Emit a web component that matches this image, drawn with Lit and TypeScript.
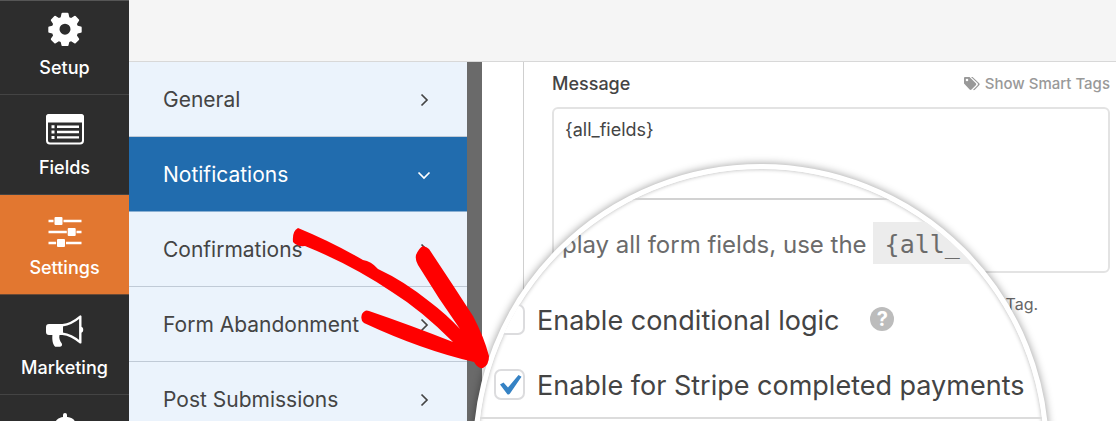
import { LitElement, html, svg, css } from "lit";
import { customElement, property } from "lit/decorators.js";
import { classMap } from "lit/directives/class-map.js";

const icons = {
  setup: svg`<svg viewBox="0 0 34 34" width="34" height="34" fill="currentColor" aria-hidden="true">
    <path fill-rule="evenodd" d="M14.500.800h5q.8 0 1 .8l.8 3.700 1.800.8 3.200-2.100q.7-.4 1.300.1l3.300 3.300q.5.600.1 1.300l-2.100 3.200.8 1.800 3.200.7q.8.200.8 1v4.400q0 .8-.8 1l-3.200.7-.8 1.900 2.100 3.200q.4.700-.1 1.300l-3.300 3.300q-.6.500-1.300.1l-3.200-2.100-1.800.8-.8 3.300q-.2.800-1 .8h-5q-.8 0-1-.8l-.8-3.300-1.800-.8-3.200 2.100q-.7.400-1.300-.1l-3.300-3.300q-.5-.6-.1-1.300l2.100-3.200-.8-1.900-3.200-.7q-.8-.2-.8-1v-4.400q0-.8.8-1l3.200-.7.8-1.800-2.100-3.200q-.4-.7.1-1.300l3.300-3.300q.6-.5 1.300-.1l3.200 2.100 1.800-.8.8-3.700q.2-.8 1-.8zM17 11.700a5.500 5.500 0 1 0 0 11 5.500 5.500 0 0 0 0-11z"/></svg>`,
  fields: svg`<svg viewBox="0 0 40 32" width="40" height="32" aria-hidden="true">
    <rect x="2" y="2" width="36" height="28.500" rx="3" fill="none" stroke="currentColor" stroke-width="2"/>
    <path fill="currentColor" d="M4 1h32a3 3 0 0 1 3 3v5.500H1V4a3 3 0 0 1 3-3zM6.500 12.300h3v3h-3zM6.500 17.600h3v3h-3zM6.500 23h3v3h-3zM12 12.500h22v2.400H12zM12 17.800h22v2.400H12zM12 23.200h22v2.400H12z"/></svg>`,
  settings: svg`<svg viewBox="0 -6 34 38" width="34" height="38" fill="currentColor" aria-hidden="true">
    <path d="M.5 3.700h5v2.600h-5zM15.500 3.700h18v2.600h-18zM.5 14.700h18.300v2.600H.5zM28.500 14.700h5v2.600h-5zM.5 25.700h7.600v2.600H.5zM18 25.700h15.500v2.600H18z"/>
    <rect x="6.500" y="1" width="8" height="8" rx="1"/><rect x="19.700" y="12" width="8" height="8" rx="1"/><rect x="9" y="23" width="8" height="8" rx="1"/></svg>`,
  marketing: svg`<svg viewBox="0 -4 40 38" width="40" height="38" aria-hidden="true">
    <path fill="currentColor" d="M4 10h14v11h-3.500c-.8 3 .3 5.800 2.300 8.500.8 1.600-.2 3.200-2 3.200h-4.600C7.600 30.500 7 25.500 7.400 21H4a3 3 0 0 1-3-3v-5a3 3 0 0 1 3-3z"/>
    <path fill="none" stroke="currentColor" stroke-width="2.400" stroke-linejoin="round" d="M17.500 11.200C24 10.500 29.500 7.500 35.300 2.600v25.800C29.500 23.500 24 20.500 17.500 19.800"/>
    <path fill="currentColor" d="M35.500 12.500a3.300 3.300 0 0 1 0 6.500z"/></svg>`,
  payments: svg`<svg viewBox="0 0 22 34" width="22" height="34" fill="none" stroke="currentColor" stroke-linecap="round" aria-hidden="true">
    <path stroke-width="4" d="M11 3v28"/>
    <path stroke-width="5" d="M18 9.500c-2-1.700-4.500-2.200-7-2.200-4 0-7.500 1.700-7.500 5 0 6.500 15 3 15 9.500 0 3.200-3.500 5-7.500 5-3.500 0-6-1-7.500-3"/></svg>`,
};

@customElement("side-nav")
class SideNav extends LitElement {
  static styles = css`
    :host { display: block; background: #2d2d2d; box-shadow: inset 0 1px #565656; }
    .item {
      box-sizing: border-box; height: 100px; padding-bottom: 14px;
      display: flex; flex-direction: column; align-items: center; justify-content: flex-end; gap: 10px;
      border-bottom: 1px solid #444; color: #fff; text-decoration: none;
      font-size: 18px; line-height: 24px; font-weight: 500;
    }
    .item:first-child { height: 95px; }
    .active { background: #e27730; border-color: #6b4a35; }
    .icon { height: 34px; display: flex; align-items: center; }
  `;
  render() {
    const items = [
      ["Setup", icons.setup], ["Fields", icons.fields], ["Settings", icons.settings],
      ["Marketing", icons.marketing], ["Payments", icons.payments],
    ] as const;
    return items.map(([label, icon]) => html`
      <a href="#" class=${classMap({ item: true, active: label === "Settings" })}>
        <span class="icon">${icon}</span>${label}
      </a>`);
  }
}

@customElement("settings-menu")
class SettingsMenu extends LitElement {
  static styles = css`
    :host { display: block; background: #ebf3fc; }
    .row {
      box-sizing: border-box; width: 100%; height: 75px; padding: 1px 36px 0 34px;
      display: flex; align-items: center; justify-content: space-between;
      border: 0; border-bottom: 1px solid #c0cad6; background: none;
      color: #444; font: 400 21px/28px Inter, sans-serif; text-align: left;
    }
    .active { background: #216cae; color: #fff; border-color: #8ab0d3; }
  `;
  render() {
    return ["General", "Notifications", "Confirmations", "Form Abandonment", "Post Submissions"].map((label) => {
      const active = label === "Notifications";
      return html`<button class=${classMap({ row: true, active })}>
        ${label}
        <svg width="14" height="14" viewBox="0 0 14 14" fill="none" stroke="currentColor" stroke-width="1.7" aria-hidden="true">
          <path d=${active ? "M1.500 4.500l5.500 5.500 5.500-5.500" : "M4.500 1.500l5.500 5.500-5.500 5.500"} />
        </svg>
      </button>`;
    });
  }
}

@customElement("check-option")
class CheckOption extends LitElement {
  @property() label = "";
  @property({ type: Boolean }) checked = false;
  static styles = css`
    :host { display: block; }
    .option { display: flex; align-items: center; gap: 12px; white-space: nowrap; }
    .text { padding-top: 4px; }
    .tick { display: grid; }
    .tick > * { grid-area: 1 / 1; }
    .box {
      appearance: none; box-sizing: border-box; width: 31px; height: 31px; margin: 0;
      border: 2px solid #dcdcde; border-radius: 7px; background: #fff;
    }
    .mark { display: none; pointer-events: none; }
    .box:checked + .mark { display: block; }
  `;
  render() {
    return html`<label class="option">
      <span class="tick">
        <input class="box" type="checkbox" .checked=${this.checked} />
        <svg class="mark" width="31" height="31" viewBox="0 0 31 31" aria-hidden="true">
          <path fill="#3582c4" d="M6 15.500l3.500-2 4.500 5L24.500 6l3 1.800L16 24.500c-.8 1.400-2.200 1.400-3 .2z" />
        </svg>
      </span>
      <span class="text">${this.label}</span>
    </label>`;
  }
}

@customElement("zoom-lens")
class ZoomLens extends LitElement {
  static styles = css`
    :host {
      box-sizing: border-box; display: block; width: 576px; height: 576px; overflow: hidden;
      border: 5px solid #fff; border-radius: 50%; background: #fff; color: #444;
      box-shadow: 0 0 9px rgba(0, 0, 0, 0.4);
      font-size: 27px; line-height: 34px;
    }
    .view { box-sizing: border-box; min-height: 100%; padding-left: 16px; border-radius: 50%; box-shadow: inset 0 0 4px rgba(0, 0, 0, 0.3); }
    .field-end { height: 29px; border-bottom: 2px solid #d2d2d2; }
    .hint { margin: 22px 0 36px; display: flex; gap: 6px; align-items: baseline; white-space: nowrap; color: #6b6b6b; font-size: 24px; }
    .code { padding: 4px 12px 0; background: #ececec; font: 25px/38px "DejaVu Sans Mono", monospace; }
    .line { display: flex; align-items: center; gap: 31px; margin-bottom: 27px; }
    .help { width: 24px; height: 24px; padding: 0; border: 0; border-radius: 50%; background: #bcbcbc; color: #fff; font: 700 20px/24px Inter, sans-serif; }
    .last { margin-bottom: 14px; }
    .rule { margin-left: -16px; border-top: 2px solid #dcdcdc; }
  `;
  render() {
    return html`<div class="view">
      <div class="field-end"></div>
      <p class="hint">To display all form fields, use the <code class="code">{all_fields}</code></p>
      <div class="line">
        <check-option label="Enable conditional logic"></check-option>
        <button class="help" aria-label="Help">?</button>
      </div>
      <div class="line last"><check-option label="Enable for Stripe completed payments" checked></check-option></div>
      <div class="rule"></div>
    </div>`;
  }
}

@customElement("app-root")
class AppRoot extends LitElement {
  static styles = css`
    :host { display: block; font-family: Inter, sans-serif; background: #fff; color: #444; }
    .page { box-sizing: border-box; height: 100vh; border-bottom: 1px solid #fff; display: grid; grid-template-columns: 129px minmax(0, 1fr); overflow: hidden; }
    .workspace { display: grid; grid-template-rows: 62px minmax(0, 1fr); min-height: 0; }
    side-nav { min-height: 0; overflow: hidden; }
    .toolbar { background: #f5f5f5; border-bottom: 1px solid #d8d8d8; }
    .body { position: relative; display: grid; grid-template-columns: 338px 15px minmax(0, 1fr); min-height: 0; overflow: hidden; }
    .gutter { background: #6a6a6a; }
    .content { position: relative; padding-left: 41px; }
    .block { box-sizing: border-box; height: 100%; border-left: 1px solid #cfcfcf; padding: 9px 6px 0 28px; }
    .head { display: flex; justify-content: space-between; align-items: center; margin-bottom: 10px; }
    .label { font-size: 18px; line-height: 26px; font-weight: 500; }
    .tags { display: flex; gap: 5px; align-items: center; color: #999; text-decoration: none; font-size: 15px; line-height: 20px; font-weight: 500; }
    .message {
      display: block; box-sizing: border-box; width: 100%; height: 166px; padding: 9px 11px; resize: none;
      border: 2px solid #e3e3e3; border-radius: 6px; background: #fff; color: #444;
      font: 400 18px/24px Inter, sans-serif;
    }
    .note { margin: 19px 0 0; font-size: 16px; line-height: 24px; color: #666; white-space: nowrap; }
    .sample { padding: 3px 12px; background: #ececec; font: 17px/20px "DejaVu Sans Mono", monospace; }
    zoom-lens { position: absolute; left: -9px; top: 102px; }
    .arrow { position: absolute; left: 151px; top: 153px; pointer-events: none; }
  `;
  render() {
    return html`<div class="page">
      <side-nav></side-nav>
      <div class="workspace">
        <header class="toolbar"></header>
        <div class="body">
          <settings-menu></settings-menu>
          <div class="gutter"></div>
          <main class="content">
            <section class="block">
              <div class="head">
                <label class="label" for="message">Message</label>
                <a class="tags" href="#">
                  <svg width="16" height="14" viewBox="0 0 16 14" fill="currentColor" aria-hidden="true">
                    <path fill-rule="evenodd" d="M0 1.200C0 .5.500 0 1.200 0H5.500l6.300 6.300c.6.600.6 1.300 0 1.900l-4.300 4.300c-.6.600-1.300.6-1.900 0L0 6.500zM3 1.700a1.300 1.300 0 1 0 0 2.600 1.300 1.300 0 0 0 0-2.600z" />
                    <path d="M7 0h1.600l6.600 6.300c.6.600.6 1.300 0 1.900l-4.400 4.500c-.6.600-1.200.5-1.700.1l4.300-4.300c.8-.8.8-1.600 0-2.400z" />
                  </svg>
                  Show Smart Tags
                </a>
              </div>
              <textarea class="message" id="message" .value=${"{all_fields}"}></textarea>
              <p class="note">To display all form fields, use the <code class="sample">{all_fields}</code> Smart Tag.</p>
            </section>
            <zoom-lens></zoom-lens>
          </main>
          <svg class="arrow" width="220" height="160" viewBox="0 0 220 160" fill="#f00" aria-hidden="true">
            <path d="M18 13Q52 27 83 45Q91 46 98 54Q124 66 150 87Q166 99 180 114Q158 83 138 50Q135 45 136 40Q139 33 143 31Q147 32 149 34Q171 67 193 101Q204 122 209 141Q209 150 203 153Q198 154 194 147Q142 135 84 108Q80 105 82 99Q85 94 89 96Q130 110 173 127Q141 95 112 77Q72 50 25 31Q17 32 13 27Q12 16 18 13Z" />
          </svg>
        </div>
      </div>
    </div>`;
  }
}
